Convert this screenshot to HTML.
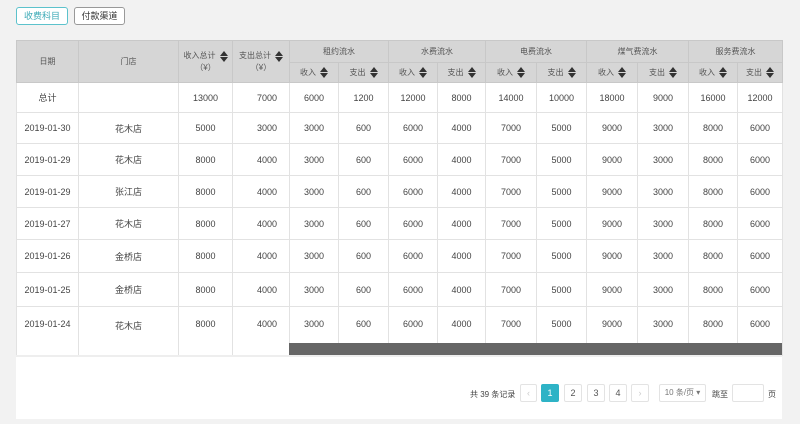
<!DOCTYPE html>
<html><head><meta charset="utf-8"><style>
*{box-sizing:border-box;margin:0;padding:0}
body{width:800px;height:424px;background:#f2f2f2;font-family:"Liberation Sans","Noto Sans CJK SC",sans-serif;font-size:9px;color:#444;position:relative;overflow:hidden}
.btn{position:absolute;top:7px;height:18px;border:1px solid #999;border-radius:3px;background:#fff;font-size:9px;line-height:16px;text-align:center;color:#333}
.panel{position:absolute;left:16px;top:40px;width:766px;height:379px;background:#fff}
table{position:absolute;left:16px;top:40px;border-collapse:collapse;table-layout:fixed}
td,th{border:1px solid #e2e2e2;text-align:center;vertical-align:middle;font-weight:normal;padding:0}
th{background:#d6d6d6;border-color:#c8c8c8;color:#555;font-size:8px}
.s{display:inline-block;width:8px;height:11px;vertical-align:middle;margin-left:4px;position:relative}
.s:before{content:"";position:absolute;left:0;top:0;border-left:4px solid transparent;border-right:4px solid transparent;border-bottom:5px solid #333}
.s:after{content:"";position:absolute;left:0;bottom:0;border-left:4px solid transparent;border-right:4px solid transparent;border-top:5px solid #333}
td.r{text-align:right;padding-right:12px}
.pg{position:absolute;top:384px;height:18px;border:1px solid #e3e3e3;border-radius:2px;background:#fff;text-align:center;line-height:16px;font-size:9px;color:#555}
.l td{vertical-align:top;padding-top:12px}
</style></head><body>
<div class="btn" style="left:16px;width:52px;border-color:#5cc2cc;color:#3aa9b6">收费科目</div>
<div class="btn" style="left:74px;width:51px">付款渠道</div>
<div class="panel"></div>
<table>
<colgroup><col style="width:62px"><col style="width:100px"><col style="width:54px"><col style="width:57px"><col style="width:49px"><col style="width:50px"><col style="width:49px"><col style="width:48px"><col style="width:51px"><col style="width:50px"><col style="width:51px"><col style="width:51px"><col style="width:49px"><col style="width:45px"></colgroup>
<tr style="height:22px"><th rowspan="2">日期</th><th rowspan="2">门店</th><th rowspan="2">收入总计<span class="s"></span><br>（¥）</th><th rowspan="2">支出总计<span class="s"></span><br>（¥）</th><th colspan="2">租约流水</th><th colspan="2">水费流水</th><th colspan="2">电费流水</th><th colspan="2">煤气费流水</th><th colspan="2">服务费流水</th></tr>
<tr style="height:20px"><th>收入<span class="s"></span></th><th>支出<span class="s"></span></th><th>收入<span class="s"></span></th><th>支出<span class="s"></span></th><th>收入<span class="s"></span></th><th>支出<span class="s"></span></th><th>收入<span class="s"></span></th><th>支出<span class="s"></span></th><th>收入<span class="s"></span></th><th>支出<span class="s"></span></th></tr>
<tr style="height:30px"><td>总计</td><td></td><td>13000</td><td class="r">7000</td><td>6000</td><td>1200</td><td>12000</td><td>8000</td><td>14000</td><td>10000</td><td>18000</td><td>9000</td><td>16000</td><td>12000</td></tr>
<tr style="height:31px"><td>2019-01-30</td><td>花木店</td><td>5000</td><td class="r">3000</td><td>3000</td><td>600</td><td>6000</td><td>4000</td><td>7000</td><td>5000</td><td>9000</td><td>3000</td><td>8000</td><td>6000</td></tr>
<tr style="height:32px"><td>2019-01-29</td><td>花木店</td><td>8000</td><td class="r">4000</td><td>3000</td><td>600</td><td>6000</td><td>4000</td><td>7000</td><td>5000</td><td>9000</td><td>3000</td><td>8000</td><td>6000</td></tr>
<tr style="height:32px"><td>2019-01-29</td><td>张江店</td><td>8000</td><td class="r">4000</td><td>3000</td><td>600</td><td>6000</td><td>4000</td><td>7000</td><td>5000</td><td>9000</td><td>3000</td><td>8000</td><td>6000</td></tr>
<tr style="height:32px"><td>2019-01-27</td><td>花木店</td><td>8000</td><td class="r">4000</td><td>3000</td><td>600</td><td>6000</td><td>4000</td><td>7000</td><td>5000</td><td>9000</td><td>3000</td><td>8000</td><td>6000</td></tr>
<tr style="height:33px"><td>2019-01-26</td><td>金桥店</td><td>8000</td><td class="r">4000</td><td>3000</td><td>600</td><td>6000</td><td>4000</td><td>7000</td><td>5000</td><td>9000</td><td>3000</td><td>8000</td><td>6000</td></tr>
<tr style="height:34px"><td>2019-01-25</td><td>金桥店</td><td>8000</td><td class="r">4000</td><td>3000</td><td>600</td><td>6000</td><td>4000</td><td>7000</td><td>5000</td><td>9000</td><td>3000</td><td>8000</td><td>6000</td></tr>
<tr class="l" style="height:49px"><td>2019-01-24</td><td>花木店</td><td>8000</td><td class="r">4000</td><td>3000</td><td>600</td><td>6000</td><td>4000</td><td>7000</td><td>5000</td><td>9000</td><td>3000</td><td>8000</td><td>6000</td></tr>
</table>
<div style="position:absolute;left:289px;top:343px;width:493px;height:12px;background:#666"></div>
<div style="position:absolute;left:16px;top:355px;width:766px;height:2px;background:#eee"></div>
<div style="position:absolute;left:470px;top:389px;font-size:8px;color:#444">共 39 条记录</div>
<div class="pg" style="left:520px;width:17px;color:#ccc">‹</div>
<div class="pg" style="left:541px;width:18px;background:#2eb3c6;border-color:#2eb3c6;color:#fff">1</div>
<div class="pg" style="left:564px;width:18px">2</div>
<div class="pg" style="left:587px;width:18px">3</div>
<div class="pg" style="left:609px;width:18px">4</div>
<div class="pg" style="left:631px;width:18px;color:#ccc">›</div>
<div class="pg" style="left:659px;width:47px;color:#777;font-size:8px">10 条/页 ▾</div>
<div style="position:absolute;left:712px;top:389px;font-size:8px">跳至</div>
<div class="pg" style="left:732px;width:32px"></div>
<div style="position:absolute;left:768px;top:389px;font-size:8px">页</div>
</body></html>
